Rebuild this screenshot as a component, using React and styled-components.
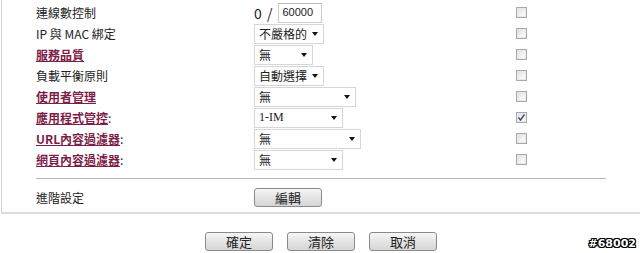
import React from "react";
import styled, { createGlobalStyle } from "styled-components";

const Global = createGlobalStyle`
  html, body {
    margin: 0;
    padding: 0;
    background: #ffffff;
  }
  body {
    font-family: "Noto Sans CJK TC", "Liberation Sans", sans-serif;
    font-size: 12px;
    color: #222;
  }
`;

const Page = styled.div`
  width: 640px;
  height: 253px;
  overflow: hidden;
  position: relative;
`;

const Panel = styled.div`
  margin-left: 1px;
  border-left: 1px solid #d4d4d4;
  border-bottom: 2px solid #dcdcdc;
  padding: 2px 0 0 34px;
  height: 214px;
  box-sizing: border-box;
`;

const Row = styled.div`
  display: grid;
  grid-template-columns: 218px 256px 40px;
  align-items: center;
  height: 21px;
`;

const Label = styled.div`
  line-height: 21px;
  white-space: nowrap;
`;

const LinkLabel = styled.a`
  color: #7d1d48;
  font-weight: bold;
  text-decoration: underline;
  cursor: pointer;
`;

const Colon = styled.span`
  color: #222;
`;

const Cell = styled.div`
  display: flex;
  align-items: center;
`;

const Ratio = styled.span`
  font-size: 14px;
  margin-right: 5px;
  letter-spacing: 1px;
`;

const NumInput = styled.div`
  width: 44px;
  height: 20px;
  box-sizing: border-box;
  border: 1px solid #cfcfcf;
  border-top-color: #b8b8b8;
  font-family: "Liberation Sans", sans-serif;
  font-size: 11px;
  padding: 1px 0 0 3px;
  line-height: 14px;
`;

const SelectBox = styled.div`
  width: ${(p) => p.$w}px;
  height: 20px;
  box-sizing: border-box;
  border: 1px solid #d6d6d6;
  background: #fff;
  display: flex;
  align-items: center;
  justify-content: space-between;
  padding: 0 5px 0 4px;
  font-size: 12px;
  font-family: ${(p) =>
    p.$serif
      ? '"Liberation Serif", "Noto Sans CJK TC", serif'
      : '"Noto Sans CJK TC", "Liberation Sans", sans-serif'};
`;

const Caret = styled.span`
  flex-shrink: 0;
  width: 0;
  height: 0;
  border-left: 3px solid transparent;
  border-right: 3px solid transparent;
  border-top: 4px solid #111;
`;

const Check = styled.span`
  flex-shrink: 0;
  display: inline-flex;
  align-items: center;
  justify-content: center;
  width: 11px;
  height: 11px;
  box-sizing: border-box;
  border: 1px solid #a9a9a9;
  background: linear-gradient(135deg, #dcdcdc 0%, #f4f4f4 60%, #fdfdfd 100%);
  box-shadow: inset 0 0 0 1px #e8e8e8;
  margin-left: 6px;
`;

const Separator = styled.div`
  margin: 8px 0 0 0;
  width: 570px;
  border-top: 1px solid #b4b4b4;
`;

const AdvRow = styled(Row)`
  margin-top: 8px;
  height: 20px;
`;

const Button = styled.button`
  width: ${(p) => p.$w || 68}px;
  height: 19px;
  padding: 0;
  border: 1px solid #8a8a8a;
  border-radius: 3px;
  background: linear-gradient(#f6f6f6, #e4e4e4 50%, #d6d6d6);
  font-family: "Noto Sans CJK TC", "Liberation Sans", sans-serif;
  font-size: 13px;
  line-height: 16px;
  color: #222;
`;

const Actions = styled.div`
  display: flex;
  gap: 14px;
  padding: 18px 0 0 205px;
`;

const Watermark = styled.div`
  position: absolute;
  right: 4px;
  bottom: 3px;
  font-family: "DejaVu Sans", sans-serif;
  font-weight: bold;
  font-size: 11px;
  color: #fff;
  text-shadow: 1px 0 0 #000, -1px 0 0 #000, 0 1px 0 #000, 0 -1px 0 #000,
    1px 1px 0 #000, -1px -1px 0 #000, 1px -1px 0 #000, -1px 1px 0 #000;
`;

function CheckBox({ checked }) {
  return (
    <Check>
      {checked && (
        <svg width="9" height="9" viewBox="0 0 9 9">
          <path d="M1.5 4.5 L3.5 7 L7.5 1.5" stroke="#3a4f8a" strokeWidth="1.4" fill="none" />
        </svg>
      )}
    </Check>
  );
}

function Select({ value, w, serif }) {
  return (
    <SelectBox $w={w} $serif={serif}>
      <span>{value}</span>
      <Caret />
    </SelectBox>
  );
}

const rows = [
  { label: "連線數控制", kind: "count" },
  { label: "IP 與 MAC 綁定", value: "不嚴格的", w: 70 },
  { label: "服務品質", link: true, value: "無", w: 59 },
  { label: "負載平衡原則", value: "自動選擇", w: 70 },
  { label: "使用者管理", link: true, value: "無", w: 102, serif: true },
  { label: "應用程式管控", link: true, colon: true, value: "1-IM", w: 89, serif: true, checked: true },
  { label: "URL內容過濾器", link: true, colon: true, value: "無", w: 107, serif: true },
  { label: "網頁內容過濾器", link: true, colon: true, value: "無", w: 89, serif: true },
];

export default function App() {
  return (
    <Page>
      <Global />
      <Panel>
        {rows.map((r, i) => (
          <Row key={i}>
            <Label>
              {r.link ? <LinkLabel>{r.label}</LinkLabel> : r.label}
              {r.colon && <Colon>:</Colon>}
            </Label>
            <Cell>
              {r.kind === "count" ? (
                <>
                  <Ratio>0 /</Ratio>
                  <NumInput>60000</NumInput>
                </>
              ) : (
                <Select value={r.value} w={r.w} serif={r.serif} />
              )}
            </Cell>
            <Cell>
              <CheckBox checked={r.checked} />
            </Cell>
          </Row>
        ))}
        <Separator />
        <AdvRow>
          <Label>進階設定</Label>
          <Cell>
            <Button $w={68}>編輯</Button>
          </Cell>
        </AdvRow>
      </Panel>
      <Actions>
        <Button>確定</Button>
        <Button>清除</Button>
        <Button>取消</Button>
      </Actions>
      <Watermark>#68002</Watermark>
    </Page>
  );
}
